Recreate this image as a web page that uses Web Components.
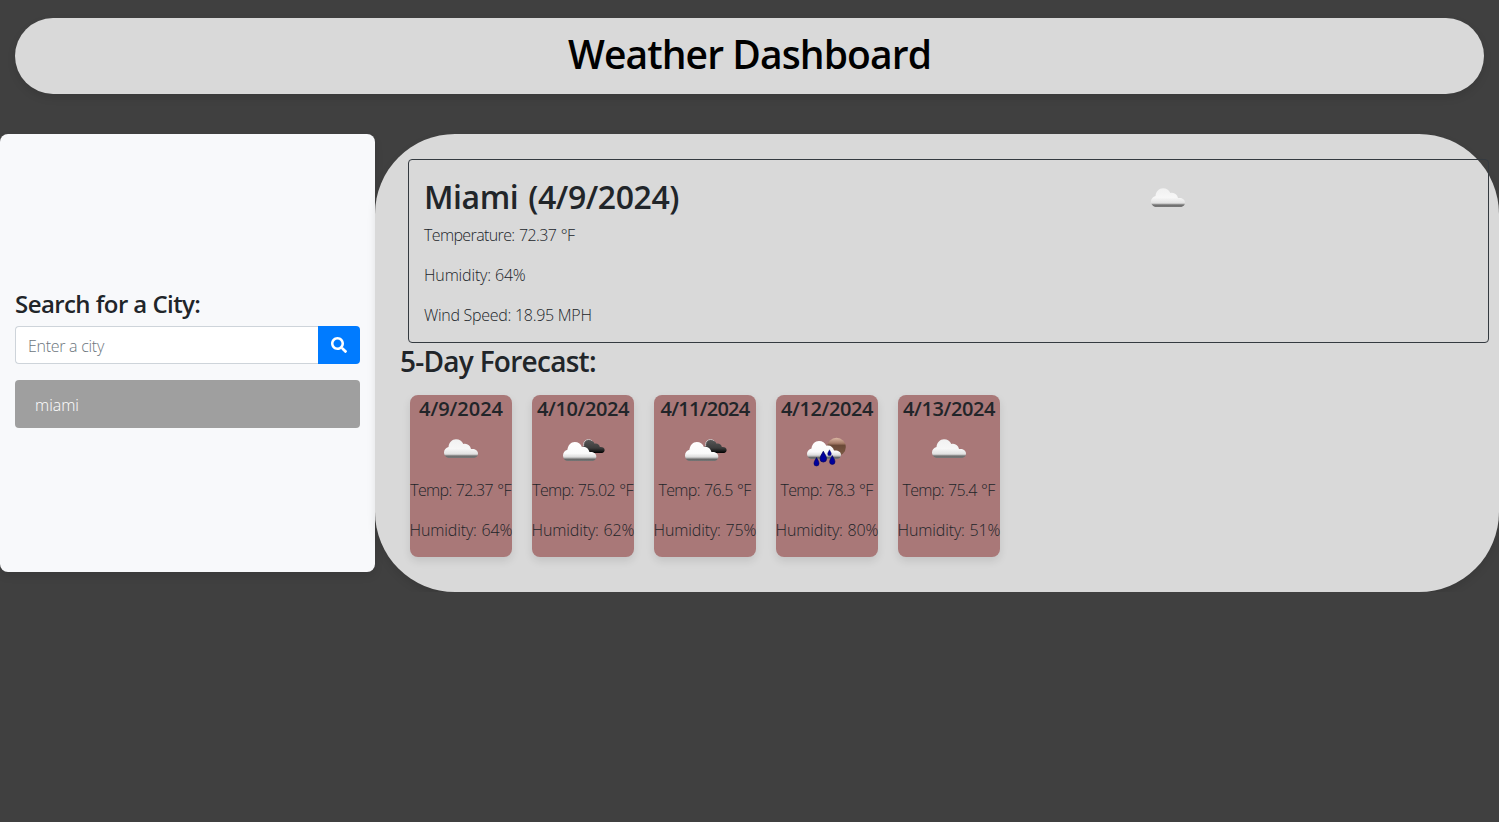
<!DOCTYPE html>
<html lang="en">
<head>
<meta charset="utf-8">
<title>Weather Dashboard</title>
<style>
  body { margin: 0; background: #404040; color: #212529; font: 300 16px/24px "Open Sans", "Noto Sans", sans-serif; }
</style>
</head>
<body>
<weather-app></weather-app>
<script>
const define = (name, html, setup) => {
  const t = document.createElement('template');
  t.innerHTML = html;
  customElements.define(name, class extends HTMLElement {
    constructor() {
      super();
      this.attachShadow({ mode: 'open' }).append(t.content.cloneNode(true));
    }
    connectedCallback() { if (setup) setup(this, this.shadowRoot); }
  });
};

const defs = `<defs>
  <linearGradient id="w" x1="0" y1="0" x2="0" y2="1"><stop offset="0" stop-color="#f1f1f1"/><stop offset=".5" stop-color="#f7f7f7"/><stop offset=".78" stop-color="#e2e2e2"/><stop offset=".84" stop-color="#bbb"/><stop offset=".89" stop-color="#6e6e6e"/><stop offset="1" stop-color="#777"/></linearGradient>
  <linearGradient id="w2" x1="0" y1="0" x2="0" y2="1"><stop offset="0" stop-color="#fff"/><stop offset=".6" stop-color="#fafafa"/><stop offset=".78" stop-color="#ddd"/><stop offset=".85" stop-color="#aaa"/><stop offset=".9" stop-color="#666"/><stop offset="1" stop-color="#777"/></linearGradient>
  <linearGradient id="k" x1="0" y1="0" x2="0" y2="1"><stop offset="0" stop-color="#555"/><stop offset=".6" stop-color="#3c3c3c"/><stop offset=".85" stop-color="#181818"/><stop offset="1" stop-color="#000"/></linearGradient>
  <linearGradient id="s" x1="0" y1="0" x2="0" y2="1"><stop offset="0" stop-color="#dcb8a4"/><stop offset=".3" stop-color="#a67c68"/><stop offset=".42" stop-color="#6b4a38"/><stop offset="1" stop-color="#7d5b45"/></linearGradient>
</defs>`;
// Cloud outline, 34 x 19 units, origin at its top-left corner.
const cloud = 'M4 19C1.400 18.200 0 16 0 13.500C0 10.500 2 8.500 4.500 7.800C5 3.200 8 0 12 0C15.500 0 18 1.800 19.300 4.900C23 3.900 26.200 6.200 27 10C31 9.500 34 11.500 34 14.500C34 17 32.500 18.500 30.500 19Z';
const drop = 'M0-5C1.200-2.500 2.800-.8 2.800 1.600A2.800 2.800 0 0 1-2.800 1.600C-2.800-.8-1.200-2.500 0-5Z';
const art = {
  overcast: `<path fill="url(#w)" transform="translate(9 14.300) scale(1 .98)" d="${cloud}"/>`,
  broken: `<circle cx="31.500" cy="19.500" r="5" fill="#555" stroke="#d0c4c4"/><path fill="url(#k)" transform="translate(24.500 15.500) scale(.68 .66)" d="${cloud}"/><path fill="url(#w2)" transform="translate(6 17) scale(.98 1)" d="${cloud}"/>`,
  rain: `<circle cx="35.500" cy="22" r="9.300" fill="url(#s)"/><path fill="url(#w2)" transform="translate(6 16) scale(1 .95)" d="${cloud}"/><g fill="#00009c" stroke="#00005c" stroke-width=".6"><path transform="translate(22.300 32) scale(1.150)" d="${drop}"/><path transform="translate(28.500 28) scale(.65)" d="${drop}"/><path transform="translate(15.500 37) scale(.9)" d="${drop}"/><path transform="translate(31.300 35.300) scale(.95)" d="${drop}"/></g>`
};

define('weather-icon', `<style>:host{display:block;width:50px;height:50px}svg{display:block}</style><svg width="50" height="50" viewBox="0 0 50 50"></svg>`,
  (el, root) => { root.querySelector('svg').innerHTML = defs + art[el.getAttribute('kind')]; });

define('page-header', `<style>
  :host{display:block;margin:18px 15px 40px;height:76px;box-sizing:border-box;padding-top:12px;border-radius:50px;background:#d9d9d9;box-shadow:0 4px 8px rgba(0,0,0,.1);text-align:center}
  h1{margin:0;font-size:39px;line-height:48px;font-weight:600;color:#000;letter-spacing:-.9px}
</style><h1><slot></slot></h1>`);

define('city-search', `<style>
  :host{display:flex;flex-direction:column;justify-content:center;box-sizing:border-box;width:375px;height:438px;padding:0 15px;border-radius:8px;background:#f8f9fb;box-shadow:0 4px 8px rgba(0,0,0,.1)}
  h3{margin:11px 0 8px;font-size:24px;line-height:29px;font-weight:600;letter-spacing:-.57px}
  .group{display:flex;height:38px;margin-bottom:16px}
  input{flex:1;min-width:0;box-sizing:border-box;border:1px solid #ced4da;border-right:0;border-radius:4px 0 0 4px;padding:1px 12px 0;background:#fff;font:inherit;letter-spacing:-.28px}
  input::placeholder{color:#6c757d;opacity:1}
  button{width:42px;padding:0;border:0;border-radius:0 4px 4px 0;background:#007bff;display:flex;align-items:center;justify-content:center}
  .item{height:48px;box-sizing:border-box;padding:13px 20px 11px;border-radius:4px;background:#9f9f9f;color:#fff}
</style>
<h3>Search for a City:</h3>
<div class="group"><input placeholder="Enter a city"><button aria-label="Search"><svg width="16" height="16" viewBox="0 0 512 512" fill="#fff"><path d="M505 442.700L405.300 343c-4.500-4.500-10.600-7-17-7H372c27.600-35.300 44-79.700 44-128C416 93.100 322.900 0 208 0S0 93.100 0 208s93.100 208 208 208c48.300 0 92.700-16.400 128-44v16.300c0 6.400 2.500 12.500 7 17l99.700 99.700c9.400 9.400 24.600 9.400 33.900 0l28.300-28.300c9.400-9.400 9.400-24.600.1-34zM208 336c-70.700 0-128-57.200-128-128 0-70.700 57.200-128 128-128 70.700 0 128 57.200 128 128 0 70.700-57.200 128-128 128z"/></svg></button></div>
<div class="item">miami</div>`);

define('current-weather', `<style>
  :host{display:flex;box-sizing:border-box;height:184px;margin:0 10px 0 33px;padding:18px 15px 0;border:1px solid #343a40;border-radius:4px}
  .info{width:727px}
  h2{margin:0;font-size:32px;line-height:38px;font-weight:600;letter-spacing:-.42px;word-spacing:2px}
  p{margin:7px 0 16px}p+p{margin-top:0}
  .temp{letter-spacing:-.62px;word-spacing:1px}.hum{letter-spacing:-.16px}.wind{letter-spacing:-.28px}
  weather-icon{margin-top:-4px;margin-left:-9px}
</style><div class="info"><h2>Miami (4/9/2024)</h2><p class="temp">Temperature: 72.37 °F</p><p class="hum">Humidity: 64%</p><p class="wind">Wind Speed: 18.95 MPH</p></div><weather-icon kind="overcast"></weather-icon>`);

define('forecast-card', `<style>
  :host{display:flex;flex-direction:column;align-items:center;box-sizing:border-box;width:102px;height:162px;padding-top:2px;border-radius:8px;background:#a97878;box-shadow:0 4px 8px rgba(0,0,0,.1);white-space:nowrap}
  h5{margin:0 0 4px;font-size:20px;line-height:24px;font-weight:600;letter-spacing:-.4px}
  :host([date="4/9/2024"]) h5{letter-spacing:-.05px}
  :host([date="4/11/2024"]) h5{letter-spacing:-.75px}
  weather-icon{margin-left:-2px}
  p{margin:3px 1px 16px 0;letter-spacing:-.65px;word-spacing:.8px}p+p{margin:0;letter-spacing:-.13px}
</style><h5></h5><weather-icon></weather-icon><p class="temp"></p><p class="hum"></p>`,
  (el, root) => {
    root.querySelector('h5').textContent = el.getAttribute('date');
    root.querySelector('.temp').textContent = 'Temp: ' + el.getAttribute('temp') + ' °F';
    root.querySelector('.hum').textContent = 'Humidity: ' + el.getAttribute('humidity') + '%';
    const icon = root.querySelector('weather-icon');
    icon.setAttribute('kind', el.getAttribute('kind'));
    icon.replaceWith(icon.cloneNode());
  });

define('weather-panel', `<style>
  :host{display:block;box-sizing:border-box;flex:1;height:458px;padding-top:25px;border-radius:80px;background:#d9d9d9;box-shadow:0 4px 8px rgba(0,0,0,.1)}
  h3{margin:1px 0 17px 25px;font-size:28px;line-height:34px;font-weight:600;letter-spacing:-.73px}
  .days{display:flex;gap:20px;margin-left:35px}
</style><current-weather></current-weather><h3>5-Day Forecast:</h3>
<div class="days">
<forecast-card date="4/9/2024" kind="overcast" temp="72.37" humidity="64"></forecast-card>
<forecast-card date="4/10/2024" kind="broken" temp="75.02" humidity="62"></forecast-card>
<forecast-card date="4/11/2024" kind="broken" temp="76.5" humidity="75"></forecast-card>
<forecast-card date="4/12/2024" kind="rain" temp="78.3" humidity="80"></forecast-card>
<forecast-card date="4/13/2024" kind="overcast" temp="75.4" humidity="51"></forecast-card>
</div>`);

define('weather-app', `<style>:host{display:flow-root}main{display:flex;align-items:flex-start}</style>
<page-header>Weather Dashboard</page-header><main><city-search></city-search><weather-panel></weather-panel></main>`);
</script>
</body>
</html>
